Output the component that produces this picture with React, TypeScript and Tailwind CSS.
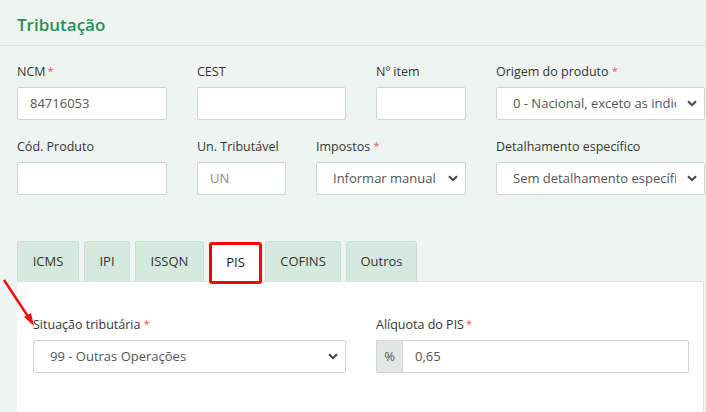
import React from "react";

const Req = () => (
  <span className="text-[#e05a5a] text-[11px] align-top leading-[16px]">*</span>
);

const Chevron = () => (
  <svg width="10" height="7" viewBox="0 0 10 7" className="shrink-0">
    <path d="M1 1.2 L5 5.2 L9 1.2" fill="none" stroke="#444" strokeWidth="2" />
  </svg>
);

const Field = ({
  label,
  width,
  children,
}: {
  label: React.ReactNode;
  width: string;
  children: React.ReactNode;
}) => (
  <div className={`${width} shrink-0`}>
    <div className="h-[18px] leading-[18px] text-[12.5px] text-[#353535] mb-[6px] whitespace-nowrap">
      {label}
    </div>
    {children}
  </div>
);

const TextBox = ({ value, muted }: { value?: string; muted?: boolean }) => (
  <div
    className={`h-[33px] bg-white border border-[#cfd3d1] rounded-[2px] pl-[12px] flex items-center text-[13px] ${
      muted ? "text-[#8a8a8a]" : "text-[#555]"
    }`}
  >
    {value}
  </div>
);

const SelectBox = ({ value }: { value: string }) => (
  <div className="h-[33px] bg-white border border-[#cfd3d1] rounded-[2px] pl-[16px] pr-[7px] flex items-center gap-[11px] text-[13px] text-[#555]">
    <span className="flex-1 overflow-hidden whitespace-nowrap">{value}</span>
    <Chevron />
  </div>
);

const tabs = [
  { name: "ICMS", w: "w-[62px]" },
  { name: "IPI", w: "w-[46px]" },
  { name: "ISSQN", w: "w-[69px]" },
  { name: "PIS", w: "w-[53px]", active: true },
  { name: "COFINS", w: "w-[76px]" },
  { name: "Outros", w: "w-[71px]" },
];

export default function App() {
  return (
    <div className="relative w-[706px] h-[412px] overflow-hidden bg-[#eef4f1] font-['Open_Sans',sans-serif] flex flex-col">
      {/* botão fechar, cortado no topo */}
      <span className="absolute right-[5px] top-[-15px] text-[20px] leading-none text-[#b9bfbc]">
        ×
      </span>

      <div className="h-[46px] shrink-0 border-b border-[#dfe5e2] px-[17px] pt-[4px] flex items-center">
        <h2 className="text-[17px] font-semibold text-[#1f9256]">Tributação</h2>
      </div>

      <div className="pl-[17px] pt-[17px]">
        <div className="flex gap-[30px] mb-[18px]">
          <Field
            width="w-[150px]"
            label={
              <>
                NCM<span className="ml-[2px]"><Req /></span>
              </>
            }
          >
            <TextBox value="84716053" />
          </Field>
          <Field width="w-[149px]" label="CEST">
            <TextBox />
          </Field>
          <Field width="w-[90px]" label="Nº item">
            <TextBox />
          </Field>
          <Field
            width="w-[209px]"
            label={
              <>
                Origem do produto <Req />
              </>
            }
          >
            <SelectBox value="0 - Nacional, exceto as indicadas nos códigos 3, 4, 5 e 8" />
          </Field>
        </div>

        <div className="flex gap-[30px]">
          <Field width="w-[150px]" label="Cód. Produto">
            <TextBox />
          </Field>
          <Field width="w-[89px]" label="Un. Tributável">
            <TextBox value="UN" muted />
          </Field>
          <Field
            width="w-[150px]"
            label={
              <>
                Impostos <Req />
              </>
            }
          >
            <SelectBox value="Informar manual" />
          </Field>
          <Field width="w-[209px]" label="Detalhamento específico">
            <SelectBox value="Sem detalhamento específico" />
          </Field>
        </div>
      </div>

      <div className="mt-[46px] pl-[17px] flex gap-[5px] h-[40px] shrink-0">
        {tabs.map((t) =>
          t.active ? (
            <div
              key={t.name}
              className={`${t.w} -mr-[2px] h-[42px] mt-[1px] relative z-10 bg-white border-[3px] border-[#ff0000] rounded-[3px] flex items-center justify-center text-[13px] font-medium text-[#222]`}
            >
              {t.name}
            </div>
          ) : (
            <div
              key={t.name}
              className={`${t.w} h-[40px] bg-[#d6e9df] border border-b-0 border-[#c9ddd2] rounded-t-[3px] flex items-center justify-center text-[13px] text-[#333]`}
            >
              {t.name}
            </div>
          )
        )}
      </div>

      <div className="ml-[17px] w-[687px] flex-1 bg-white border-t border-r border-[#dfe5e2] pl-[16px] pt-[34px] flex gap-[30px]">
        <Field
          width="w-[313px]"
          label={
            <>
              Situação tributária <Req />
            </>
          }
        >
          <SelectBox value="99 - Outras Operações" />
        </Field>
        <Field
          width="w-[313px]"
          label={
            <>
              Alíquota do PIS<span className="ml-[2px]"><Req /></span>
            </>
          }
        >
          <div className="h-[33px] flex border border-[#cfd3d1] rounded-[2px] overflow-hidden text-[13px] text-[#555]">
            <div className="w-[26px] bg-[#e4e6e5] border-r border-[#cfd3d1] flex items-center justify-center">
              %
            </div>
            <div className="flex-1 bg-white pl-[12px] flex items-center">0,65</div>
          </div>
        </Field>
      </div>

      {/* seta vermelha de anotação */}
      <svg
        className="absolute left-0 top-[274px]"
        width="40"
        height="56"
        viewBox="0 0 40 56"
      >
        <line x1="4" y1="6" x2="29" y2="44" stroke="#ee1111" strokeWidth="2.5" />
        <path d="M34 52 L24 43 L31 39 Z" fill="#ee1111" />
      </svg>
    </div>
  );
}
